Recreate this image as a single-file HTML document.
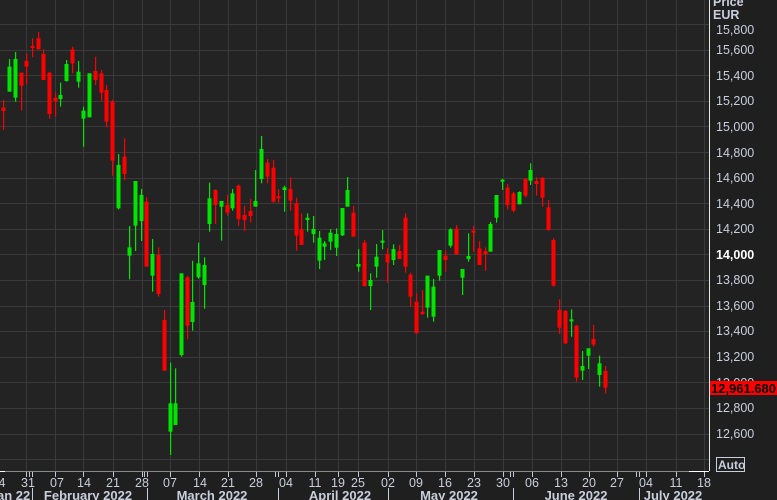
<!DOCTYPE html>
<html><head><meta charset="utf-8"><style>
html,body{margin:0;padding:0;background:#1f1f1f;width:777px;height:500px;overflow:hidden}
svg{display:block}
text{font-family:"Liberation Sans",Arial,sans-serif}
</style></head><body>
<svg id="s" width="777" height="500" viewBox="0 0 777 500" xmlns="http://www.w3.org/2000/svg">
<rect x="0" y="0" width="709" height="471" fill="#232323"/>
<rect x="709" y="0" width="68" height="500" fill="#1f1f1f"/>
<rect x="0" y="471" width="709" height="29" fill="#1f1f1f"/>
<g id="grid" stroke="#3a3a3a" stroke-width="1"></g>
<g id="candles"></g>
<line x1="709.5" y1="0" x2="709.5" y2="471" stroke="#e8e8e8"/>
<line x1="0" y1="471.5" x2="709" y2="471.5" stroke="#8a8a8a"/>
<line x1="0" y1="471.5" x2="5" y2="471.5" stroke="#fff"/>
<line x1="689" y1="471.5" x2="709" y2="471.5" stroke="#fff"/>
<g id="ticks" stroke="#bfc6d4"></g>
<g fill="#c8cedc" font-size="12.5">
<text x="713" y="6" font-weight="bold">Price</text>
<text x="713" y="19" font-weight="bold">EUR</text>
<text x="716" y="34">15,800</text>
<text x="716" y="54">15,600</text>
<text x="716" y="80">15,400</text>
<text x="716" y="105">15,200</text>
<text x="716" y="131">15,000</text>
<text x="716" y="157">14,800</text>
<text x="716" y="182">14,600</text>
<text x="716" y="208">14,400</text>
<text x="716" y="233">14,200</text>
<text x="716" y="259" font-weight="bold" fill="#ffffff">14,000</text>
<text x="716" y="284">13,800</text>
<text x="716" y="310">13,600</text>
<text x="716" y="335">13,400</text>
<text x="716" y="361">13,200</text>
<text x="716" y="387">13,000</text>
<text x="716" y="412">12,800</text>
<text x="716" y="438">12,600</text>
</g>
<rect x="710" y="381" width="67" height="14" fill="#ff0000"/>
<text x="711" y="393" font-size="13" font-weight="bold" fill="#000" textLength="65" lengthAdjust="spacingAndGlyphs">12,961.680</text>
<rect x="716.5" y="457.5" width="28" height="14" fill="none" stroke="#c8cedc"/>
<text x="718" y="469" font-size="12" font-weight="bold" fill="#c8cedc">Auto</text>
<g fill="#c8cedc" font-size="12.5" text-anchor="middle">
<text x="2" y="487">4</text><text x="28" y="487">31</text><text x="57" y="487">07</text><text x="84" y="487">14</text>
<text x="113" y="487">21</text><text x="142" y="487">28</text><text x="170" y="487">07</text><text x="200" y="487">14</text>
<text x="228" y="487">21</text><text x="256" y="487">28</text><text x="286" y="487">04</text><text x="315" y="487">11</text>
<text x="338" y="487">19</text><text x="358" y="487">25</text><text x="388" y="487">02</text><text x="416" y="487">09</text>
<text x="445" y="487">16</text><text x="474" y="487">23</text><text x="503" y="487">30</text><text x="532" y="487">06</text>
<text x="561" y="487">13</text><text x="589" y="487">20</text><text x="617" y="487">27</text><text x="646" y="487">04</text>
<text x="676" y="487">11</text><text x="704" y="487">18</text>
</g>
<g fill="#c8cedc" font-size="13" font-weight="bold" text-anchor="middle">
<text x="10" y="500">Jan 22</text>
<text x="88" y="500">February 2022</text>
<text x="212" y="500">March 2022</text>
<text x="340" y="500">April 2022</text>
<text x="449" y="500">May 2022</text>
<text x="576" y="500">June 2022</text>
<text x="673" y="500">July 2022</text>
</g>
<g stroke="#c8cedc"><line x1="32.5" y1="488" x2="32.5" y2="500"/><line x1="147.5" y1="488" x2="147.5" y2="500"/><line x1="278.5" y1="488" x2="278.5" y2="500"/><line x1="388.5" y1="488" x2="388.5" y2="500"/><line x1="513.5" y1="488" x2="513.5" y2="500"/><line x1="639.5" y1="488" x2="639.5" y2="500"/></g>
</svg>
<script>
var NS="http://www.w3.org/2000/svg";
function el(p,t,a){var e=document.createElementNS(NS,t);for(var k in a)e.setAttribute(k,a[k]);p.appendChild(e);return e;}
var g=document.getElementById('grid');
for(var k=0;k<18;k++){var y=Math.round(24+25.6*k)+0.5;el(g,'line',{x1:0,y1:y,x2:709,y2:y});}
var vx=[26,55,83,113,142,170,199,228,256,286,315,338,358,388,416,445,474,503,532,561,589,617,646,676,704];
var t=document.getElementById('ticks');
vx.forEach(function(x){el(g,'line',{x1:x+.5,y1:0,x2:x+.5,y2:471});el(t,'line',{x1:x+.5,y1:472,x2:x+.5,y2:477});});
[29,32,144,147,275,278,510,513,636,639].forEach(function(x){el(t,'line',{x1:x+.5,y1:472,x2:x+.5,y2:477});});
var G='#00e600',R='#ff0000';
var groups=[
[0,20,[[10,263,273,240,330,R],[28,140,215,117,215,G],[46,117,233,96,245,G],[62,158,197,158,272,R],[79,123,140,100,192,R],[97,78,83,55,112,R],[115,55,88,36,88,R],[130,102,180,88,180,R],[148,158,282,155,296,R],[166,233,243,218,290,R],[181,225,237,188,260,G],[199,132,183,120,185,G],[217,88,130,80,160,R],[235,155,185,123,203,G],[250,272,296,260,380,G],[268,160,292,160,292,G],[286,153,180,110,195,R],[304,160,218,150,242,R],[319,210,305,195,322,R],[337,245,422,240,467,R],[355,435,565,402,568,G],[373,410,462,355,480,R],[388,682,707,618,778,G],[406,483,617,483,693,G],[424,525,603,507,663,G],[439,545,740,532,740,R],[457,702,767,657,815,G],[475,705,822,682,830,R],[493,900,1052,870,1052,R],[509,1150,1235,1028,1305,G],[526,1150,1215,1045,1215,G],[544,760,1005,760,1010,G],[562,772,917,768,957,R],[577,846,906,722,932,G],[595,730,772,668,776,G],[613,735,795,712,866,G],[628,535,612,488,635,G],[646,510,555,508,612,R],[664,543,560,543,662,G],[682,555,578,525,587,R],[697,520,565,507,572,G],[715,497,597,494,617,R],[733,585,600,557,633,R],[751,573,588,537,608,R],[766,543,560,450,560,G]]],
[200,130,[[184,57,147,18,160,G],[202,98,140,87,160,R],[219,113,215,90,218,R],[235,199,205,178,218,R],[253,172,180,167,245,G],[271,177,212,142,242,R],[287,220,317,203,362,R],[304,298,345,250,345,R],[321,263,270,250,305,G],[340,297,312,258,338,G],[356,323,392,303,417,G],[373,340,350,333,390,G],[391,308,335,297,360,G],[409,312,353,295,378,G],[425,234,316,234,318,G],[442,180,230,141,230,G],[460,248,320,228,320,R],[475,402,410,357,425,G],[493,338,468,330,470,R],[511,450,468,430,540,G],[529,380,410,342,443,G],[545,332,338,300,358,G],[562,372,397,355,458,R],[580,357,390,343,405,G],[598,363,387,345,387,R],[614,263,410,250,428,R],[631,434,500,428,530,R],[649,515,610,490,610,R],[665,545,552,480,555,R],[682,437,533,437,563,G],[700,470,560,447,575,G],[718,360,437,360,452,G],[735,377,390,362,425,R],[751,298,347,295,353,G],[769,296,373,285,375,R]]],
[400,150,[[186,357,383,357,435,G],[203,318,327,250,335,G],[220,242,248,228,305,R],[238,295,345,273,345,R],[256,303,312,292,362,R],[271,222,305,216,305,G],[289,135,203,135,218,G],[307,89,95,87,120,G],[322,113,165,102,178,R],[340,130,182,125,187,R],[358,126,163,124,163,G],[375,87,137,85,142,R],[391,60,92,40,105,G],[409,93,102,82,137,R],[427,83,143,82,170,R],[445,172,240,150,243,R],[460,270,407,265,410,R],[478,480,533,448,552,R],[495,483,580,480,582,R],[512,508,513,478,560,G],[529,527,683,525,695,R],[547,648,662,603,690,G],[565,595,617,595,657,G],[580,567,584,525,590,R],[598,640,675,617,710,G],[616,663,713,648,730,R]]]
];
var c=document.getElementById('candles');
groups.forEach(function(gr){var ox=gr[0],oy=gr[1];gr[2].forEach(function(d){
var x=ox+d[0]/3,bt=oy+d[1]/3,bb=oy+d[2]/3,wt=oy+d[3]/3,wb=oy+d[4]/3;
var cx=Math.round(x);
el(c,'rect',{x:cx,y:wt,width:1.2,height:Math.max(1,wb-wt),fill:d[5]});
el(c,'rect',{x:cx-1.5,y:bt,width:4,height:Math.max(2,bb-bt),fill:d[5]});
});});
</script>
</body></html>
